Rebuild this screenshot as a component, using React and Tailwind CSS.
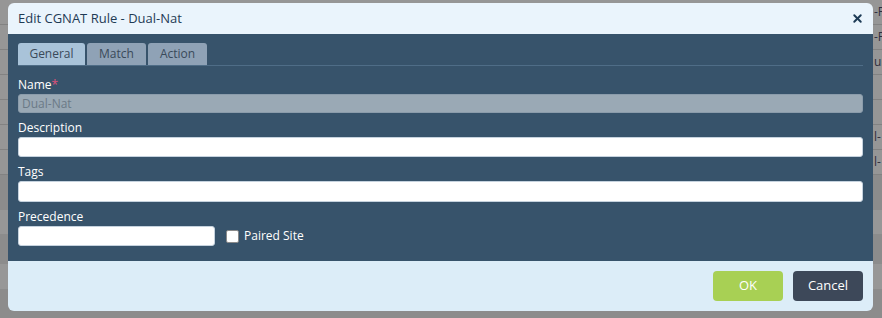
import { X } from 'lucide-react';

const rows = [
  { text: '-P' },
  { text: '-P' },
  { text: 'ur' },
  { text: '' },
  { text: '' },
  { text: 'l-' },
  { text: 'l-' },
];

function Backdrop() {
  return (
    <div className="flex flex-col text-[12px] text-[#2f2f3f]">
      {rows.map((r, i) => (
        <div key={i} className="h-[25px] flex items-center border-b border-[#828282]">
          <div className="w-[874px] shrink-0" />
          <span className="whitespace-nowrap">{r.text}</span>
        </div>
      ))}
      <div className="h-[35px] bg-[#8c8c8c]" />
      <div className="h-[24px] bg-[#979797]" />
      <div className="h-[30px] bg-[#8c8c8c]" />
      <div className="h-[25px] bg-[#979797]" />
      <div className="h-[30px] bg-[#8c8c8c]" />
    </div>
  );
}

function Field({ label, required, children }) {
  return (
    <div className="flex flex-col mt-[7px] first:mt-0">
      <label className="h-[16px] leading-[16px] text-[12px] font-medium text-white mb-px">
        {label}
        {required && <span className="text-[#e0507a]">*</span>}
      </label>
      {children}
    </div>
  );
}

export default function App() {
  return (
    <div
      className="relative w-[882px] h-[318px] overflow-hidden bg-[#969696]"
      style={{ fontFamily: '"Open Sans", "Noto Sans", sans-serif' }}
    >
      <Backdrop />

      <div className="absolute left-[8px] top-[3px] w-[865px] h-[308px] rounded-[6px] overflow-hidden flex flex-col">
        {/* header */}
        <div className="h-[31px] shrink-0 bg-[#eaf4fc] flex items-center justify-between pl-[10px] pr-[9px]">
          <span className="text-[13px] text-[#1f3b55]">Edit CGNAT Rule - Dual-Nat</span>
          <X size={13} strokeWidth={3.5} className="text-[#1d3a55]" />
        </div>

        {/* body */}
        <div className="h-[227px] shrink-0 bg-[#37536b] pl-[10px] pr-[10px] pt-[10px]">
          <div className="flex items-end gap-[2px] border-b border-[#4f6d87] h-[22px]">
            <div className="w-[67px] h-[22px] rounded-t-[3px] bg-[#a9c3d9] text-[#3a4a5a] text-[12px] flex items-center justify-center">
              General
            </div>
            <div className="w-[59px] h-[22px] rounded-t-[3px] bg-[#8fa2b6] text-[#3a4a5a] text-[12px] flex items-center justify-center">
              Match
            </div>
            <div className="w-[59px] h-[22px] rounded-t-[3px] bg-[#8fa2b6] text-[#3a4a5a] text-[12px] flex items-center justify-center">
              Action
            </div>
          </div>

          <div className="flex flex-col mt-[11px]">
            <Field label="Name" required>
              <div className="h-[19px] rounded-[3px] bg-[#9aa9b5] border border-[#8b9cab] text-[12px] text-[#6b7a87] pl-[3px] leading-[17px]">
                Dual-Nat
              </div>
            </Field>
            <Field label="Description">
              <input className="h-[20px] rounded-[3px] bg-white border border-[#c5d2de] outline-none" />
            </Field>
            <Field label="Tags">
              <input className="h-[21px] rounded-[3px] bg-white border border-[#c5d2de] outline-none" />
            </Field>
            <Field label="Precedence">
              <div className="flex items-center">
                <input className="w-[197px] h-[20px] rounded-[3px] bg-white border border-[#c5d2de] outline-none" />
                <div className="ml-[11px] w-[13px] h-[13px] rounded-[2px] bg-white border border-[#8a8a8a]" />
                <span className="ml-[5px] text-[12px] text-white">Paired Site</span>
              </div>
            </Field>
          </div>
        </div>

        {/* footer */}
        <div className="flex-1 bg-[#dcedf8] flex justify-end items-start gap-[10px] pt-[10px] pr-[10px]">
          <button className="w-[70px] h-[30px] rounded-[4px] bg-[#a8d054] text-white text-[13px]">OK</button>
          <button className="w-[70px] h-[30px] rounded-[4px] bg-[#3d4859] text-white text-[13px]">Cancel</button>
        </div>
      </div>
    </div>
  );
}
